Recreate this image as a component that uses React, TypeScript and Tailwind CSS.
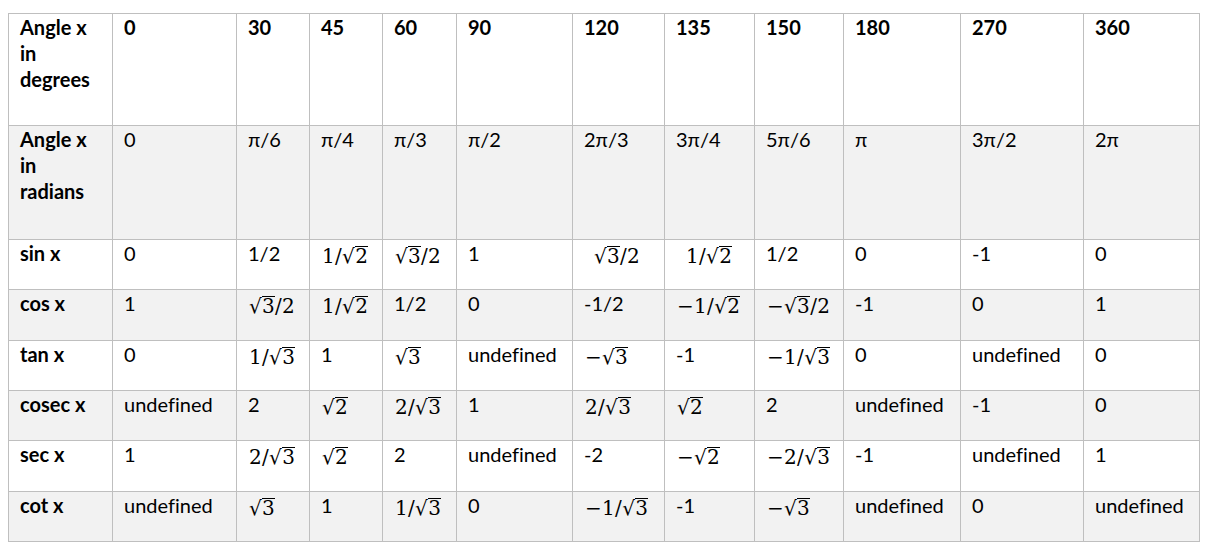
import React from "react";

type Cell = string | { m: React.ReactNode; pad?: boolean };

const R = ({ c }: { c: string }) => (
  <span className="inline-flex items-baseline">
    <span>√</span>
    <span className="border-t border-black leading-[0.95]">{c}</span>
  </span>
);

const m = (node: React.ReactNode, pad?: boolean): Cell => ({ m: node, pad });

const rows: { head: React.ReactNode; cells: Cell[]; gray: boolean; bold?: boolean }[] = [
  {
    head: (
      <>
        Angle x<br />in<br />degrees
      </>
    ),
    cells: ["0", "30", "45", "60", "90", "120", "135", "150", "180", "270", "360"],
    gray: false,
    bold: true,
  },
  {
    head: (
      <>
        Angle x<br />in<br />radians
      </>
    ),
    cells: ["0", "π/6", "π/4", "π/3", "π/2", "2π/3", "3π/4", "5π/6", "π", "3π/2", "2π"],
    gray: true,
  },
  {
    head: "sin x",
    cells: [
      "0",
      "1/2",
      m(<>1/<R c="2" /></>),
      m(<><R c="3" />/2</>),
      "1",
      m(<><R c="3" />/2</>, true),
      m(<>1/<R c="2" /></>, true),
      "1/2",
      "0",
      "-1",
      "0",
    ],
    gray: false,
  },
  {
    head: "cos x",
    cells: [
      "1",
      m(<><R c="3" />/2</>),
      m(<>1/<R c="2" /></>),
      "1/2",
      "0",
      "-1/2",
      m(<>−1/<R c="2" /></>),
      m(<>−<R c="3" />/2</>),
      "-1",
      "0",
      "1",
    ],
    gray: true,
  },
  {
    head: "tan x",
    cells: [
      "0",
      m(<>1/<R c="3" /></>),
      "1",
      m(<R c="3" />),
      "undefined",
      m(<>−<R c="3" /></>),
      "-1",
      m(<>−1/<R c="3" /></>),
      "0",
      "undefined",
      "0",
    ],
    gray: false,
  },
  {
    head: "cosec x",
    cells: [
      "undefined",
      "2",
      m(<R c="2" />),
      m(<>2/<R c="3" /></>),
      "1",
      m(<>2/<R c="3" /></>),
      m(<R c="2" />),
      "2",
      "undefined",
      "-1",
      "0",
    ],
    gray: true,
  },
  {
    head: "sec x",
    cells: [
      "1",
      m(<>2/<R c="3" /></>),
      m(<R c="2" />),
      "2",
      "undefined",
      "-2",
      m(<>−<R c="2" /></>),
      m(<>−2/<R c="3" /></>),
      "-1",
      "undefined",
      "1",
    ],
    gray: false,
  },
  {
    head: "cot x",
    cells: [
      "undefined",
      m(<R c="3" />),
      "1",
      m(<>1/<R c="3" /></>),
      "0",
      m(<>−1/<R c="3" /></>),
      "-1",
      m(<>−<R c="3" /></>),
      "undefined",
      "0",
      "undefined",
    ],
    gray: true,
  },
];

export default function App() {
  return (
    <div
      className="w-[1208px] h-[549px] bg-white overflow-hidden text-black [font-variant-ligatures:none]"
      style={{ fontFamily: "Lato, 'Open Sans', sans-serif" }}
    >
      <div className="ml-[8px] mt-[13px] w-max grid grid-cols-[104px_124px_73px_73px_74px_116px_92px_90px_89px_117px_123px_116px] grid-rows-[112px_114px_50px_51px_50px_50px_51px_50px] border-l border-t border-[#bfbfbf] text-[20px] leading-[26px]">
        {rows.map((r, ri) => (
          <React.Fragment key={ri}>
            <div className={`border-r border-b border-[#bfbfbf] pl-[11px] font-bold ${r.gray ? "bg-[#f2f2f2]" : "bg-white"}`}>
              {r.head}
            </div>
            {r.cells.map((c, ci) => (
              <div
                key={ci}
                className={`border-r border-b border-[#bfbfbf] pl-[11px] ${r.bold ? "font-bold" : ""} ${r.gray ? "bg-[#f2f2f2]" : "bg-white"}`}
              >
                {typeof c === "string" ? (
                  c
                ) : (
                  <span
                    className={`inline-block pt-[3px] text-[20px] tracking-[0.3px] ${c.pad ? "pl-[10px]" : "pl-[1px]"}`}
                    style={{ fontFamily: "'DejaVu Serif', serif" }}
                  >
                    {c.m}
                  </span>
                )}
              </div>
            ))}
          </React.Fragment>
        ))}
      </div>
    </div>
  );
}
